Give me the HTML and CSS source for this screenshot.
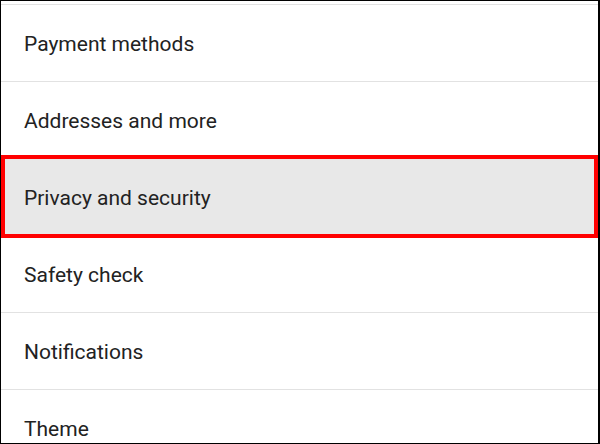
FILE: index.html
```html
<!DOCTYPE html>
<html>
<head>
<meta charset="utf-8">
<link rel="stylesheet" href="styles.css">
</head>
<body>
<div class="frame">
  <ul class="settings">
    <li class="prev"></li>
    <li class="row">Payment methods</li>
    <li class="row">Addresses and more</li>
    <li class="row selected">Privacy and security</li>
    <li class="row">Safety check</li>
    <li class="row">Notifications</li>
    <li class="row">Theme</li>
  </ul>
</div>
</body>
</html>
```

FILE: styles.css
```css
html, body {
  margin: 0;
  padding: 0;
  background: #ffffff;
}

.frame {
  box-sizing: border-box;
  width: 600px;
  height: 444px;
  border: 1px solid #000000;
  border-right-width: 2px;
  overflow: hidden;
  background: #ffffff;
}

.settings {
  list-style: none;
  margin: 0;
  padding: 0;
  display: flex;
  flex-direction: column;
}

.prev {
  height: 3px;
  border-bottom: 1px solid #e2e2e2;
  flex-shrink: 0;
}

.row {
  position: relative;
  box-sizing: content-box;
  height: 74px;
  padding-top: 2px;
  display: flex;
  align-items: center;
  padding-left: 23px;
  border-bottom: 1px solid #e2e2e2;
  font-family: Roboto, "Noto Sans", sans-serif;
  font-size: 21px;
  color: #222222;
  flex-shrink: 0;
}

.row.selected {
  background: #e8e8e8;
}

.row.selected::after {
  content: "";
  position: absolute;
  left: 0;
  right: 0;
  top: -4px;
  bottom: -3px;
  border: 4px solid #ff0000;
}
```
